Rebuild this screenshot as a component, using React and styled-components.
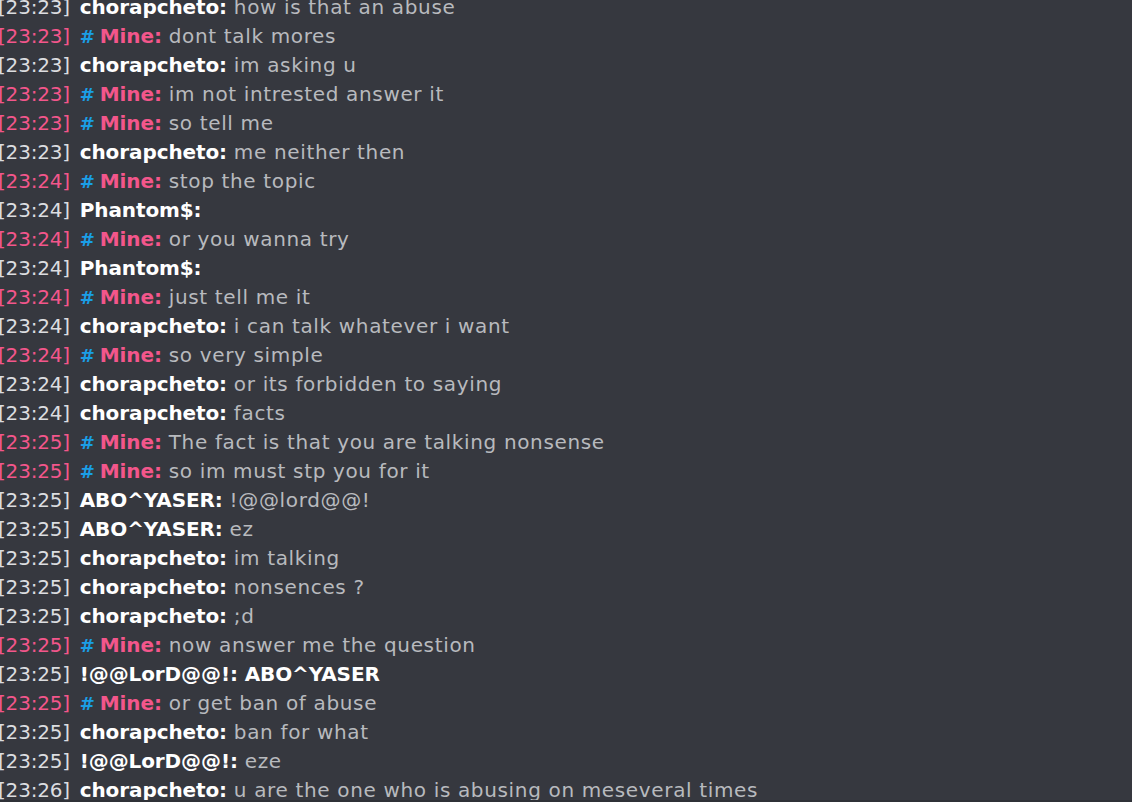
import React from "react";
import styled, { createGlobalStyle } from "styled-components";

const GlobalStyle = createGlobalStyle`
  html, body {
    margin: 0;
    padding: 0;
    background: #36383f;
  }
  body {
    font-family: "DejaVu Sans", "Open Sans", sans-serif;
  }
`;

const ChatWindow = styled.div`
  width: 1132px;
  height: 802px;
  background: #36383f;
  border-bottom: 2px solid #2f3137;
  box-sizing: border-box;
  overflow: hidden;
`;

const LineList = styled.div`
  display: flex;
  flex-direction: column;
  margin-top: -7px;
`;

const Line = styled.div`
  height: 29px;
  line-height: 29px;
  font-size: 20px;
  letter-spacing: 0.5px;
  white-space: nowrap;
  margin-left: -2px;
  flex-shrink: 0;
`;

const Time = styled.span`
  color: ${props => (props.mine ? "#f3568b" : "#dcdde0")};
  letter-spacing: -0.2px;
  margin-right: 3px;
`;

const Hash = styled.span`
  color: #1a9ee6;
  font-size: 18px;
  font-weight: 700;
  letter-spacing: 0;
  margin-right: 5px;
`;

const Nick = styled.span`
  color: ${props => (props.mine ? "#f3568b" : "#ffffff")};
  font-weight: 700;
  letter-spacing: -0.1px;
`;

const Message = styled.span`
  color: ${props => (props.bold ? "#ffffff" : "#b8babe")};
  font-weight: ${props => (props.bold ? 700 : 400)};
  letter-spacing: ${props => (props.bold ? "-0.1px" : "0.65px")};
`;

const lines = [
  ["23:23", "chorapcheto", "how is that an abuse"],
  ["23:23", "Mine", "dont talk mores"],
  ["23:23", "chorapcheto", "im asking u"],
  ["23:23", "Mine", "im not intrested answer it"],
  ["23:23", "Mine", "so tell me"],
  ["23:23", "chorapcheto", "me neither then"],
  ["23:24", "Mine", "stop the topic"],
  ["23:24", "Phantom$", ""],
  ["23:24", "Mine", "or you wanna try"],
  ["23:24", "Phantom$", ""],
  ["23:24", "Mine", "just tell me it"],
  ["23:24", "chorapcheto", "i can talk whatever i want"],
  ["23:24", "Mine", "so very simple"],
  ["23:24", "chorapcheto", "or its forbidden to saying"],
  ["23:24", "chorapcheto", "facts"],
  ["23:25", "Mine", "The fact is that you are talking nonsense"],
  ["23:25", "Mine", "so im must stp you for it"],
  ["23:25", "ABO^YASER", "!@@lord@@!"],
  ["23:25", "ABO^YASER", "ez"],
  ["23:25", "chorapcheto", "im talking"],
  ["23:25", "chorapcheto", "nonsences ?"],
  ["23:25", "chorapcheto", ";d"],
  ["23:25", "Mine", "now answer me the question"],
  ["23:25", "!@@LorD@@!", "ABO^YASER", true],
  ["23:25", "Mine", "or get ban of abuse"],
  ["23:25", "chorapcheto", "ban for what"],
  ["23:25", "!@@LorD@@!", "eze"],
  ["23:26", "chorapcheto", "u are the one who is abusing on meseveral times"],
];

const App = () => (
  <>
    <GlobalStyle />
    <ChatWindow>
      <LineList>
        {lines.map(([time, nick, text, bold], i) => {
          const mine = nick === "Mine";
          return (
            <Line key={i}>
              <Time mine={mine}>[{time}]</Time>{" "}
              {mine && <Hash>#</Hash>}
              <Nick mine={mine}>{nick}:</Nick>{" "}
              <Message bold={bold}>{text}</Message>
            </Line>
          );
        })}
      </LineList>
    </ChatWindow>
  </>
);

export default App;
